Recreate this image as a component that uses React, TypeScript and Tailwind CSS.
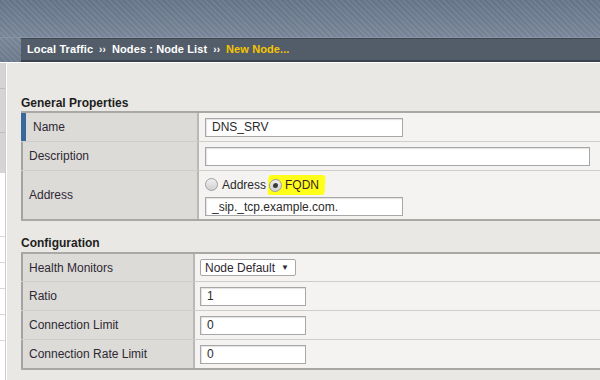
import React from 'react';

const font = { fontFamily: '"Liberation Sans", Arial, sans-serif' };

const Input: React.FC<{ value?: string; w: string }> = ({ value = '', w }) => (
  <div className={`${w} h-[19px] bg-white border border-[#a7a7a7] shadow-[inset_1px_1px_1px_rgba(0,0,0,0.12)] flex items-center px-[6px] text-[12px] text-[#2a2a2a]`}>
    {value}
  </div>
);

const Radio: React.FC<{ checked?: boolean }> = ({ checked }) => (
  <span className="w-[13px] h-[13px] rounded-full border border-[#a0a0a0] bg-gradient-to-b from-[#f0f0f0] to-[#d0d0d0] flex items-center justify-center">
    {checked && <span className="w-[5px] h-[5px] rounded-full bg-[#3a3a3a]" />}
  </span>
);

const Row: React.FC<{ label: string; labelW: string; h: string; pad: string; accent?: boolean; last?: boolean; children: React.ReactNode }> = ({
  label,
  labelW,
  h,
  pad,
  accent,
  last,
  children,
}) => (
  <div className={`flex ${h} ${last ? '' : 'border-b border-[#cfcdca]'}`}>
    <div
      className={`${labelW} shrink-0 bg-[#dddbd8] flex items-center text-[12px] text-[#2e2833] border-r-2 border-[#b9b8b5] ${
        accent ? 'border-l-[5px] border-l-[#3b679a] pl-[7px]' : 'border-l-2 border-l-[#a3a3a3] pl-[6px]'
      }`}
    >
      {label}
    </div>
    <div className={`flex-1 bg-[#f4f3f1] flex flex-col justify-center ${pad} gap-[4px]`}>{children}</div>
  </div>
);

export default function App() {
  return (
    <div className="w-[600px] h-[380px] overflow-hidden bg-[#e9e8e4] flex flex-col" style={font}>
      {/* top band */}
      <div className="h-[62px] shrink-0 bg-[linear-gradient(180deg,#67768a_0%,#7a889b_60%,#6e7c8f_100%)] relative">
        <div className="absolute inset-0 bg-[repeating-linear-gradient(45deg,rgba(255,255,255,0.05)_0px,rgba(255,255,255,0.05)_2px,rgba(0,0,0,0.03)_2px,rgba(0,0,0,0.03)_4px)]" />
        <div className="relative flex flex-col h-full">
          <div className="h-[38px] border-b border-[#8894a4]" />
          <div className="ml-[21px] flex-1 bg-[#525d69] border-t border-[#3f4852] border-b-2 border-b-[#3a434d] flex items-center pl-[6px] text-[11px] font-bold text-white tracking-[0.1px]">
            <span>Local Traffic</span>
            <span className="mx-[6px] text-[10px]">››</span>
            <span>Nodes : Node List</span>
            <span className="mx-[6px] text-[10px]">››</span>
            <span className="text-[#f7c500]">New Node...</span>
          </div>
        </div>
      </div>
      <div className="h-px bg-white shrink-0" />

      <div className="flex flex-1 min-h-0">
        {/* left sidebar remnant */}
        <div className="w-[5px] shrink-0 flex flex-col">
          <div className="h-[110px] bg-[#d5d5d5] flex flex-col">
            <div className="h-[26px] border-b border-[#bdbdbd]" />
            <div className="h-[44px] border-b border-[#bdbdbd]" />
          </div>
          <div className="flex-1 bg-white flex flex-col">
            <div className="h-[64px] border-b border-[#d8d8d8]" />
            <div className="h-[26px] border-b border-[#d8d8d8]" />
            <div className="h-[26px] border-b border-[#d8d8d8]" />
            <div className="h-[26px] border-b border-[#d8d8d8]" />
            <div className="h-[26px] border-b border-[#d8d8d8]" />
          </div>
        </div>
        <div className="w-[2px] shrink-0 bg-[#cfcecb] border-r border-white" />

        <div className="flex-1 pl-[14px] pt-[31px] flex flex-col">
          <div className="text-[12px] font-bold text-[#1e1e1e] h-[17px]">General Properties</div>
          <div className="w-[600px] border-y-2 border-[#a9a8a5]">
            <Row label="Name" labelW="w-[178px]" h="h-[29px]" pad="pl-[6px]" accent>
              <Input w="w-[198px]" value="DNS_SRV" />
            </Row>
            <Row label="Description" labelW="w-[178px]" h="h-[29px]" pad="pl-[6px]">
              <Input w="w-[385px]" />
            </Row>
            <Row label="Address" labelW="w-[178px]" h="h-[48px]" pad="pl-[6px]" last>
              <div className="flex items-center text-[12px] text-[#2a2a2a] h-[17px] mt-[2px]">
                <Radio />
                <span className="ml-[4px]">Address</span>
                <span className="ml-[2px] flex items-center bg-[#ffff1a] rounded-[3px] pl-[1px] pr-[6px] py-[1px] -skew-x-3">
                  <Radio checked />
                  <span className="ml-[3px] text-[#3a1d1d] skew-x-3">FQDN</span>
                </span>
              </div>
              <Input w="w-[198px]" value="_sip._tcp.example.com." />
            </Row>
          </div>

          <div className="text-[12px] font-bold text-[#1e1e1e] mt-[13px] h-[18px]">Configuration</div>
          <div className="w-[600px] border-y-2 border-[#a9a8a5]">
            <Row label="Health Monitors" labelW="w-[174px]" h="h-[28px]" pad="pl-[5px]">
              <div className="w-[96px] h-[17px] bg-white border border-[#a7a7a7] rounded-[2px] flex items-center justify-between px-[4px] text-[12px] text-[#2e2833]">
                <span>Node Default</span>
                <span className="text-[8px] mr-[2px]">▼</span>
              </div>
            </Row>
            <Row label="Ratio" labelW="w-[174px]" h="h-[29px]" pad="pl-[5px]">
              <Input w="w-[106px]" value="1" />
            </Row>
            <Row label="Connection Limit" labelW="w-[174px]" h="h-[29px]" pad="pl-[5px]">
              <Input w="w-[106px]" value="0" />
            </Row>
            <Row label="Connection Rate Limit" labelW="w-[174px]" h="h-[28px]" pad="pl-[5px]" last>
              <Input w="w-[106px]" value="0" />
            </Row>
          </div>
        </div>
      </div>
    </div>
  );
}
